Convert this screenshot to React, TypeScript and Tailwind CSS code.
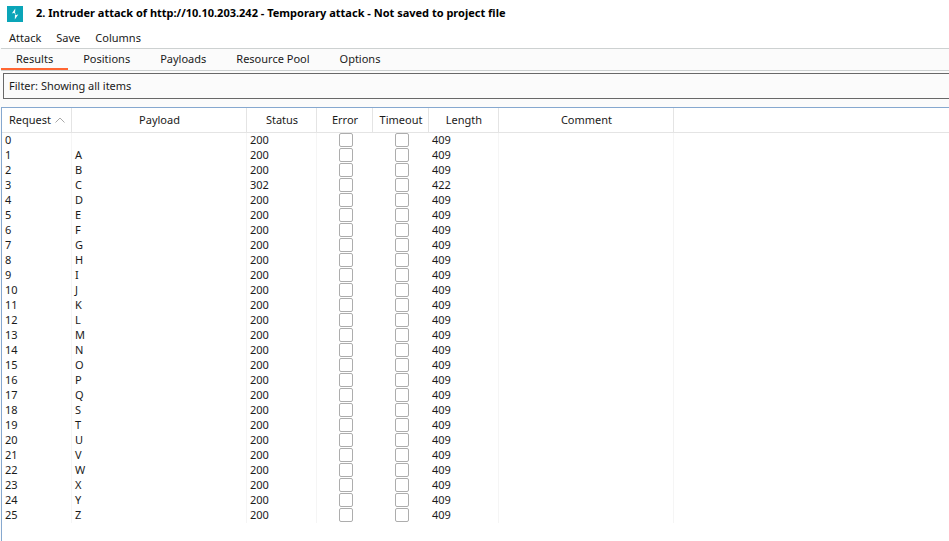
const menus = ['Attack', 'Save', 'Columns'];
const tabs = ['Results', 'Positions', 'Payloads', 'Resource Pool', 'Options'];

const rows = Array.from({ length: 26 }, (_, i) => ({
  request: i,
  payload: i === 0 ? '' : 'ABCDEFGHIJKLMNOPQSTUVWXYZ'[i - 1],
  status: i === 3 ? 302 : 200,
  length: i === 3 ? 422 : 409,
}));

const head = 'h-[25px] border-r border-[#e4e4e4] p-0 pb-px pl-px text-center font-normal';
const cell = 'h-[15px] border-r border-[#f5f5f5] pt-0 pr-0 pb-0.5 pl-[3px] leading-[13px]';

function Flag({ label }: { label: string }) {
  return (
    <input
      type="checkbox"
      aria-label={label}
      className="ml-px block size-3.5 appearance-none rounded-[2px] border border-[#adadad] bg-white checked:bg-[#ff6633]"
    />
  );
}

function Logo() {
  return (
    <svg width="16" height="16" viewBox="0 0 16 16" aria-hidden="true">
      <rect width="16" height="16" fill="#0aa5b8" />
      <path d="M8.3 2.6 4.8 7.4H8zM4.8 6.9h3.6v2H11zM8 8.6h3.3L7.8 13.6z" fill="#f2fbfc" />
    </svg>
  );
}

export default function App() {
  return (
    <div className="flex min-h-screen flex-col overflow-hidden bg-white font-['Noto_Sans',sans-serif] text-[11px] leading-[15px] text-[#1a1a1a]">
      <header className="flex h-[27px] items-center gap-[13px] pl-[7px]">
        <Logo />
        <h1 className="pb-0.5 whitespace-nowrap text-[11px] font-bold text-black">
          2. Intruder attack of http://10.10.203.242 - Temporary attack - Not saved to project file
        </h1>
      </header>

      <nav className="flex h-[21px] items-center gap-[15px] pl-[9px]">
        {menus.map((m) => (
          <button key={m} type="button">
            {m}
          </button>
        ))}
      </nav>

      <div className="flex flex-1 flex-col bg-[#fbfbfb] pl-px">
        <div role="tablist" className="flex h-[23px] border-y border-[#cdd1d1]">
          {tabs.map((t, i) => (
            <button
              key={t}
              type="button"
              role="tab"
              aria-selected={i === 0}
              className={
                i === 0
                  ? 'border-b-2 border-[#ff6633] px-[15px]'
                  : 'border-b-2 border-transparent px-[15px]'
              }
            >
              {t}
            </button>
          ))}
        </div>

        <button
          type="button"
          className="mt-0.5 ml-0.5 flex h-[26px] items-center border border-r-0 border-[#686868] pb-0.5 pl-[5px] text-left"
        >
          Filter: Showing all items
        </button>

        <main className="mt-2 flex-1 border-t border-l border-[#86a8cf] bg-white">
          <table className="w-full table-fixed border-separate border-spacing-0">
            <colgroup>
              <col className="w-[70px]" />
              <col className="w-[175px]" />
              <col className="w-[70px]" />
              <col className="w-14" />
              <col className="w-14" />
              <col className="w-[70px]" />
              <col className="w-[175px]" />
              <col />
            </colgroup>
            <thead>
              <tr className="*:border-b">
                <th className={head} aria-sort="ascending">
                  <button type="button" className="inline-flex items-center gap-1">
                    Request
                    <svg width="10" height="6" viewBox="0 0 10 6" fill="none" aria-hidden="true">
                      <path d="M.5 5.5 5 1l4.5 4.5" stroke="#a8a8a8" />
                    </svg>
                  </button>
                </th>
                <th className={head}>Payload</th>
                <th className={head}>Status</th>
                <th className={head}>Error</th>
                <th className={head}>Timeout</th>
                <th className={head}>Length</th>
                <th className={head}>Comment</th>
                <td className="border-[#e4e4e4] p-0" />
              </tr>
            </thead>
            <tbody>
              {rows.map((r) => (
                <tr key={r.request}>
                  <td className={cell}>{r.request}</td>
                  <td className={cell}>{r.payload}</td>
                  <td className={cell}>{r.status}</td>
                  <td className="p-0 pb-px">
                    <div className="flex justify-center">
                      <Flag label={`Request ${r.request} error`} />
                    </div>
                  </td>
                  <td className="p-0 pb-px">
                    <div className="flex justify-center">
                      <Flag label={`Request ${r.request} timeout`} />
                    </div>
                  </td>
                  <td className={cell}>{r.length}</td>
                  <td className={cell} />
                  <td className="p-0" />
                </tr>
              ))}
            </tbody>
          </table>
        </main>
      </div>
    </div>
  );
}
